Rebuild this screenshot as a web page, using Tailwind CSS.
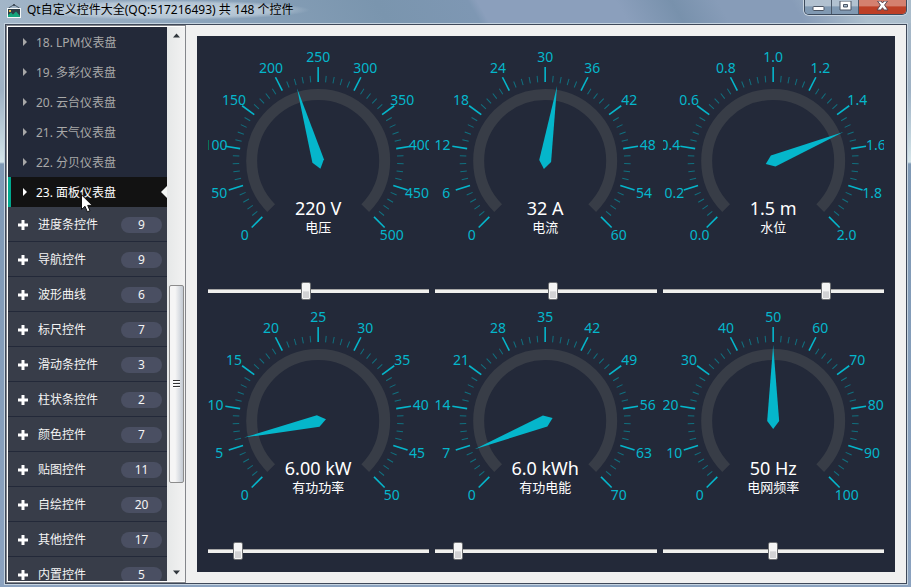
<!DOCTYPE html>
<html lang="zh-CN">
<head>
<meta charset="utf-8">
<title>Qt自定义控件大全</title>
<script src="https://cdn.jsdelivr.net/npm/@tailwindcss/browser@4"></script>
</head>
<body class="h-screen overflow-hidden bg-[#859cb8] font-['Noto_Sans','Noto_Sans_CJK_SC',sans-serif] text-xs">
<div class="flex h-screen flex-col bg-[linear-gradient(180deg,#a9bac9_0px,#9fb2c5_90px,#c3d5de_140px,#d5e5ea_162px,#7f99b5_164px,#8ba2bf_100%)] pr-[3px] pb-[2px] pl-1">
  <header class="-mr-[3px] -ml-1 flex h-[23px] shrink-0 items-start justify-between bg-[linear-gradient(60deg,#a4b7c9_0%,#8fa6bd_18%,#7a95ae_42%,#7e97b3_52%,#8b9fbc_53%,#8b9fbc_68%,#7891ac_74%,#879cb8_79%,#879cb8_87%,#adbfcd_94%,#aabccb_100%)] pr-1 pl-[7px]">
    <div class="flex items-center gap-[6px]">
      <svg class="mt-[2px]" width="14" height="14" viewBox="0 0 14 14" aria-hidden="true">
        <path d="M1.500 4L6.500 1H7.500L12.500 4" fill="none" stroke="#4a5a68"/>
        <rect x="6" y="0" width="2" height="2" fill="#44505c"/>
        <rect x=".5" y="4.500" width="13" height="9" fill="#2e3f48" stroke="#f4f8f8"/>
        <path d="M1 13V11L4 8.500L6 10.500L9 7.500L13 12V13Z" fill="#14a57c"/>
        <rect x="2" y="6" width="2" height="2" fill="#efb83e"/>
      </svg>
      <h1 class="rounded-full bg-[radial-gradient(closest-side,#d5e1eacc_0%,#c5d3dfaa_75%,#c5d3df00_100%)] pr-4 leading-5 whitespace-nowrap text-black">Qt自定义控件大全(QQ:517216493) 共 148 个控件</h1>
    </div>
    <div class="flex h-[15px] overflow-hidden rounded-b-[5px] border border-t-0 border-[#3c4a5c] shadow-[0_0_0_1px_#c9d5e0]">
      <button aria-label="最小化" class="flex w-[27px] items-center justify-center border-r border-[#4a5869] bg-linear-to-b from-[#b1c1d0] from-40% to-[#8099b2] to-50%">
        <svg width="13" height="12" viewBox="0 0 13 12"><rect x="1" y="5.500" width="11" height="4" rx="1" fill="#fff" stroke="#4b5564"/></svg>
      </button>
      <button aria-label="最大化" class="flex w-[27px] items-center justify-center border-r border-[#4a5869] bg-linear-to-b from-[#b1c1d0] from-40% to-[#8099b2] to-50%">
        <svg width="13" height="12" viewBox="0 0 13 12"><path fill-rule="evenodd" d="M1 0H12V9H1ZM4.500 3.500V6H8.500V3.500Z" fill="#fff" stroke="#4b5564"/></svg>
      </button>
      <button aria-label="关闭" class="flex w-[47px] items-center justify-center bg-linear-to-b from-[#d4806f] from-40% to-[#bd3f26] to-50%">
        <svg width="13" height="12" viewBox="0 0 13 12"><path d="M1.500 0H5L6.500 2L8 0H11.500L8.600 4L12 9H8L6.500 6.700L5 9H1L4.400 4Z" fill="#fff" stroke="#5a4550"/></svg>
      </button>
    </div>
  </header>

  <div class="flex min-h-0 flex-1 border border-[#c6d4e0]">
    <div class="flex min-h-0 min-w-0 flex-1 border border-[#3e4859] bg-[#f0f0f0]">
      <aside class="flex w-[180px] shrink-0 border border-[#84868b] bg-white p-px pr-0">
        <nav class="w-[159px] overflow-hidden bg-[#383d49]">
          <ul id="pages" class="bg-[#232939]"></ul>
          <ul id="groups"></ul>
        </nav>
        <div class="flex flex-1 flex-col items-center bg-linear-to-r from-[#e6e8e8] to-[#f2f2f2] py-[6px]" aria-hidden="true">
          <svg width="9" height="5" viewBox="0 0 9 5"><path d="M1 4.500L4.500 .5L8 4.500Z" fill="#30363c"/></svg>
          <div class="mt-[247px] flex h-[198px] w-[15px] flex-col items-center justify-center gap-px rounded-[2px] border border-[#8c8c8c] bg-linear-to-r from-[#f5f5f5] from-40% to-[#c3cad3]">
            <i class="h-[2px] w-[7px] border-t border-[#333] bg-white"></i>
            <i class="h-[2px] w-[7px] border-t border-[#333] bg-white"></i>
            <i class="h-[2px] w-[7px] border-t border-[#333] bg-white"></i>
          </div>
          <svg class="mt-auto" width="9" height="5" viewBox="0 0 9 5"><path d="M1 .5L4.500 4.500L8 .5Z" fill="#30363c"/></svg>
        </div>
      </aside>
      <main id="gauges" class="m-[11px] grid min-w-0 flex-1 grid-cols-3 grid-rows-2 gap-[6px] bg-[#232939] p-[11px]"></main>
    </div>
  </div>
</div>

<script>
const pages = ["18. LPM仪表盘", "19. 多彩仪表盘", "20. 云台仪表盘", "21. 天气仪表盘", "22. 分贝仪表盘", "23. 面板仪表盘"];
document.getElementById("pages").innerHTML = pages.map((name, i) => {
  const active = i === pages.length - 1;
  return `<li><a href="#" class="relative flex h-[30px] items-center border-l-[3px] pl-3 ${active ? "border-[#00a88e] bg-[#121212] text-white" : "border-transparent text-[#a8a8a8]"}">
    <svg class="mr-[9px]" width="4" height="8" viewBox="0 0 4 8" aria-hidden="true"><path d="M0 0L4 4L0 8Z" fill="currentColor"/></svg><span class="pt-[2px]">${name}</span>
    ${active ? `<svg class="absolute right-0" width="6" height="12" viewBox="0 0 6 12" aria-hidden="true"><path d="M6 0L0 6L6 12Z" fill="#f4f6f4"/></svg>
    <svg class="absolute top-[17px] left-[70px] z-10" width="12" height="19" viewBox="0 0 12 19" aria-hidden="true"><path d="M.5 .8V15.500L4 12.300L6.300 17.800L9 16.700L6.700 11.400H11.300Z" fill="#fff" stroke="#111"/></svg>` : ""}
  </a></li>`;
}).join("");

const groups = [["进度条控件", 9], ["导航控件", 9], ["波形曲线", 6], ["标尺控件", 7], ["滑动条控件", 3], ["柱状条控件", 2], ["颜色控件", 7], ["贴图控件", 11], ["自绘控件", 20], ["其他控件", 17], ["内置控件", 5]];
document.getElementById("groups").innerHTML = groups.map(([name, count]) =>
  `<li><button class="flex h-[35px] w-full items-center border-b border-[#232939] pt-[2px] pr-[5px] pl-[10px] text-left text-[#f4f4f4]">
    <svg class="mr-[10px]" width="10" height="10" viewBox="0 0 10 10" aria-hidden="true"><path d="M5 0V10M0 5H10" stroke="#fff" stroke-width="3"/></svg>
    <span class="flex-1">${name}</span><span class="h-4 w-[41px] rounded-full bg-[#4a4f62] text-center leading-4">${count}</span>
  </button></li>`).join("");

const START = -135, SPAN = 270, MAJOR = 10, MINOR = 5, LABEL_R = 104;
const gauges = [
  { title: "电压", value: 220, max: 500, digits: 0, text: "220 V" },
  { title: "电流", value: 32, max: 60, digits: 0, text: "32 A" },
  { title: "水位", value: 1.5, max: 2, digits: 1, text: "1.5 m" },
  { title: "有功功率", value: 6, max: 50, digits: 0, text: "6.00 kW" },
  { title: "有功电能", value: 6, max: 70, digits: 0, text: "6.0 kWh" },
  { title: "电网频率", value: 50, max: 100, digits: 0, text: "50 Hz" }
];
function dial(g) {
  let s = "";
  for (let i = 0; i <= MAJOR * MINOR; i++) {
    const a = START + SPAN * i / (MAJOR * MINOR), major = i % MINOR === 0;
    s += `<line y1="-79" y2="${major ? -94 : -85.500}" transform="rotate(${a})" stroke="${major ? "#05b6cb" : "#11707f"}" stroke-width="${major ? 1.600 : 1}"/>`;
    if (major) {
      const r = a * Math.PI / 180;
      s += `<text x="${(LABEL_R * Math.sin(r)).toFixed(1)}" y="${(5 - LABEL_R * Math.cos(r)).toFixed(1)}" text-anchor="middle" class="text-sm" fill="#05b6cb">${(g.max * i / (MAJOR * MINOR)).toFixed(g.digits)}</text>`;
    }
  }
  const e = 66.500 * Math.SQRT1_2;
  return `<svg class="min-h-0 w-full flex-1" viewBox="-110 -114 221 228" role="img" aria-label="${g.title} ${g.text}">
    <path d="M${-e} ${e}A66.500 66.500 0 1 1 ${e} ${e}" fill="none" stroke="#383d47" stroke-width="11"/>${s}
    <path d="M-6 0L0 8L6 0L0 -76Z" fill="#05b6cb" transform="rotate(${START + SPAN * g.value / g.max})"/>
    <text y="54" text-anchor="middle" class="text-lg" fill="#fff">${g.text}</text>
    <text y="71" text-anchor="middle" class="text-[13px]" fill="#fff">${g.title}</text>
  </svg>`;
}
document.getElementById("gauges").innerHTML = gauges.map(g =>
  `<section class="flex min-h-0 min-w-0 flex-col gap-[6px]">${dial(g)}
    <input type="range" aria-label="${g.title}" min="0" max="${g.max}" step="any" value="${g.value}" class="h-5 w-full shrink-0 appearance-none bg-transparent [&::-webkit-slider-runnable-track]:h-1 [&::-webkit-slider-runnable-track]:border-t [&::-webkit-slider-runnable-track]:border-[#a6a6a6] [&::-webkit-slider-runnable-track]:bg-[#f0f0ee] [&::-webkit-slider-thumb]:-mt-2 [&::-webkit-slider-thumb]:h-[18px] [&::-webkit-slider-thumb]:w-[10px] [&::-webkit-slider-thumb]:appearance-none [&::-webkit-slider-thumb]:rounded-[2px] [&::-webkit-slider-thumb]:border [&::-webkit-slider-thumb]:border-[#6d6f72] [&::-webkit-slider-thumb]:bg-linear-to-b [&::-webkit-slider-thumb]:from-[#f4f4f4] [&::-webkit-slider-thumb]:from-50% [&::-webkit-slider-thumb]:to-[#d2d2d4] [&::-webkit-slider-thumb]:to-55% [&::-webkit-slider-thumb]:shadow-[inset_0_0_0_1px_#f6f6f6]">
  </section>`).join("");
</script>
</body>
</html>
